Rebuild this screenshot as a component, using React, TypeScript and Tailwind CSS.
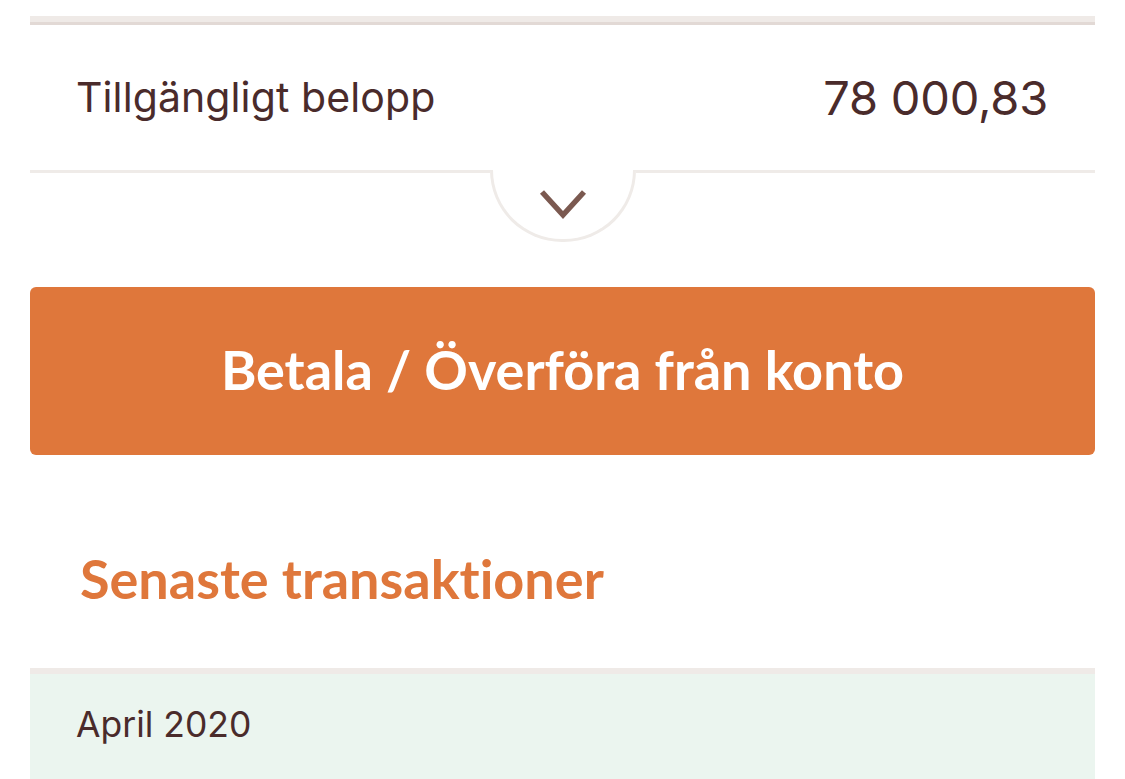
export default function App() {
  return (
    <div className="w-[1125px] h-[779px] overflow-hidden bg-white px-[30px] pt-[16px] font-['Inter','Liberation_Sans',sans-serif] text-[#4a2b2b]">
      <div className="h-[9px] border-b-[3px] border-[#e2d9d5] bg-[#efeae7]" />

      <div className="flex h-[145px] items-center justify-between pl-[46px] pr-[47px]">
        <span className="text-[41px] leading-none tracking-[0.1px]">Tillgängligt belopp</span>
        <span className="text-[47px] leading-none tracking-[-0.2px]">78 000,83</span>
      </div>

      <div className="flex items-start">
        <div className="h-[3px] flex-1 bg-[#efebe8]" />
        <div className="flex h-[72px] w-[146px] justify-center rounded-b-full border-x-[3px] border-b-[3px] border-[#efebe8] pt-[18px]">
          <svg width="48" height="32" viewBox="0 0 48 32" fill="none">
            <path d="M3 4 L24 27 L45 4" stroke="#7b5950" strokeWidth="5.5" />
          </svg>
        </div>
        <div className="h-[3px] flex-1 bg-[#efebe8]" />
      </div>

      <button className="mt-[45px] flex h-[168px] w-full items-center justify-center rounded-[6px] bg-[#df773b] pb-[4px] font-['Lato',sans-serif] text-[54px] font-bold text-white [font-variant-ligatures:none]">
        Betala / Överföra från konto
      </button>

      <div className="flex h-[213px] items-start pl-[50px] pt-[97px]">
        <h2 className="font-['Lato',sans-serif] text-[54px] font-bold leading-none text-[#df773b] [font-variant-ligatures:none]">Senaste transaktioner</h2>
      </div>

      <div className="h-[6px] bg-[#efeae7]" />
      <div className="flex h-[105px] items-start bg-[#ebf5ef] pl-[46px] pt-[33px]">
        <span className="text-[35.5px] leading-none">April 2020</span>
      </div>
    </div>
  );
}
